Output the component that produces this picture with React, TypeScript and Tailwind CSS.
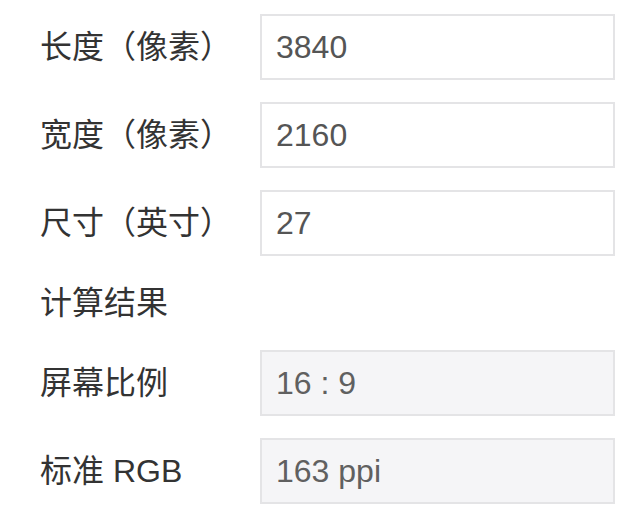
import React from "react";

type Field = {
  label: string;
  value: string;
  readOnly?: boolean;
};

const inputs: Field[] = [
  { label: "长度（像素）", value: "3840" },
  { label: "宽度（像素）", value: "2160" },
  { label: "尺寸（英寸）", value: "27" },
];

const results: Field[] = [
  { label: "屏幕比例", value: "16 : 9", readOnly: true },
  { label: "标准 RGB", value: "163 ppi", readOnly: true },
];

function Row({ label, value, readOnly }: Field) {
  return (
    <div className="flex items-center h-[66px]">
      <label className="w-[260px] shrink-0 pl-[40px] text-[32px] text-[#333]">{label}</label>
      <input
        defaultValue={value}
        readOnly={readOnly}
        className={
          readOnly
            ? "w-[355px] shrink-0 h-[66px] border-2 border-[#e4e4e6] bg-[#f5f5f7] px-[14px] text-[32px] text-[#606060] outline-none"
            : "w-[355px] shrink-0 h-[66px] border-2 border-[#e4e4e6] bg-white px-[14px] text-[32px] text-[#555] outline-none"
        }
      />
    </div>
  );
}

export default function App() {
  return (
    <div
      className="w-[640px] h-[526px] bg-white pt-[14px] flex flex-col gap-[22px]"
      style={{ fontFamily: '"Liberation Sans", "Noto Sans CJK SC", sans-serif' }}
    >
      {inputs.map((f) => (
        <Row key={f.label} {...f} />
      ))}
      <div className="h-[50px] flex items-center pl-[40px] text-[32px] text-[#333]">计算结果</div>
      {results.map((f) => (
        <Row key={f.label} {...f} />
      ))}
    </div>
  );
}
